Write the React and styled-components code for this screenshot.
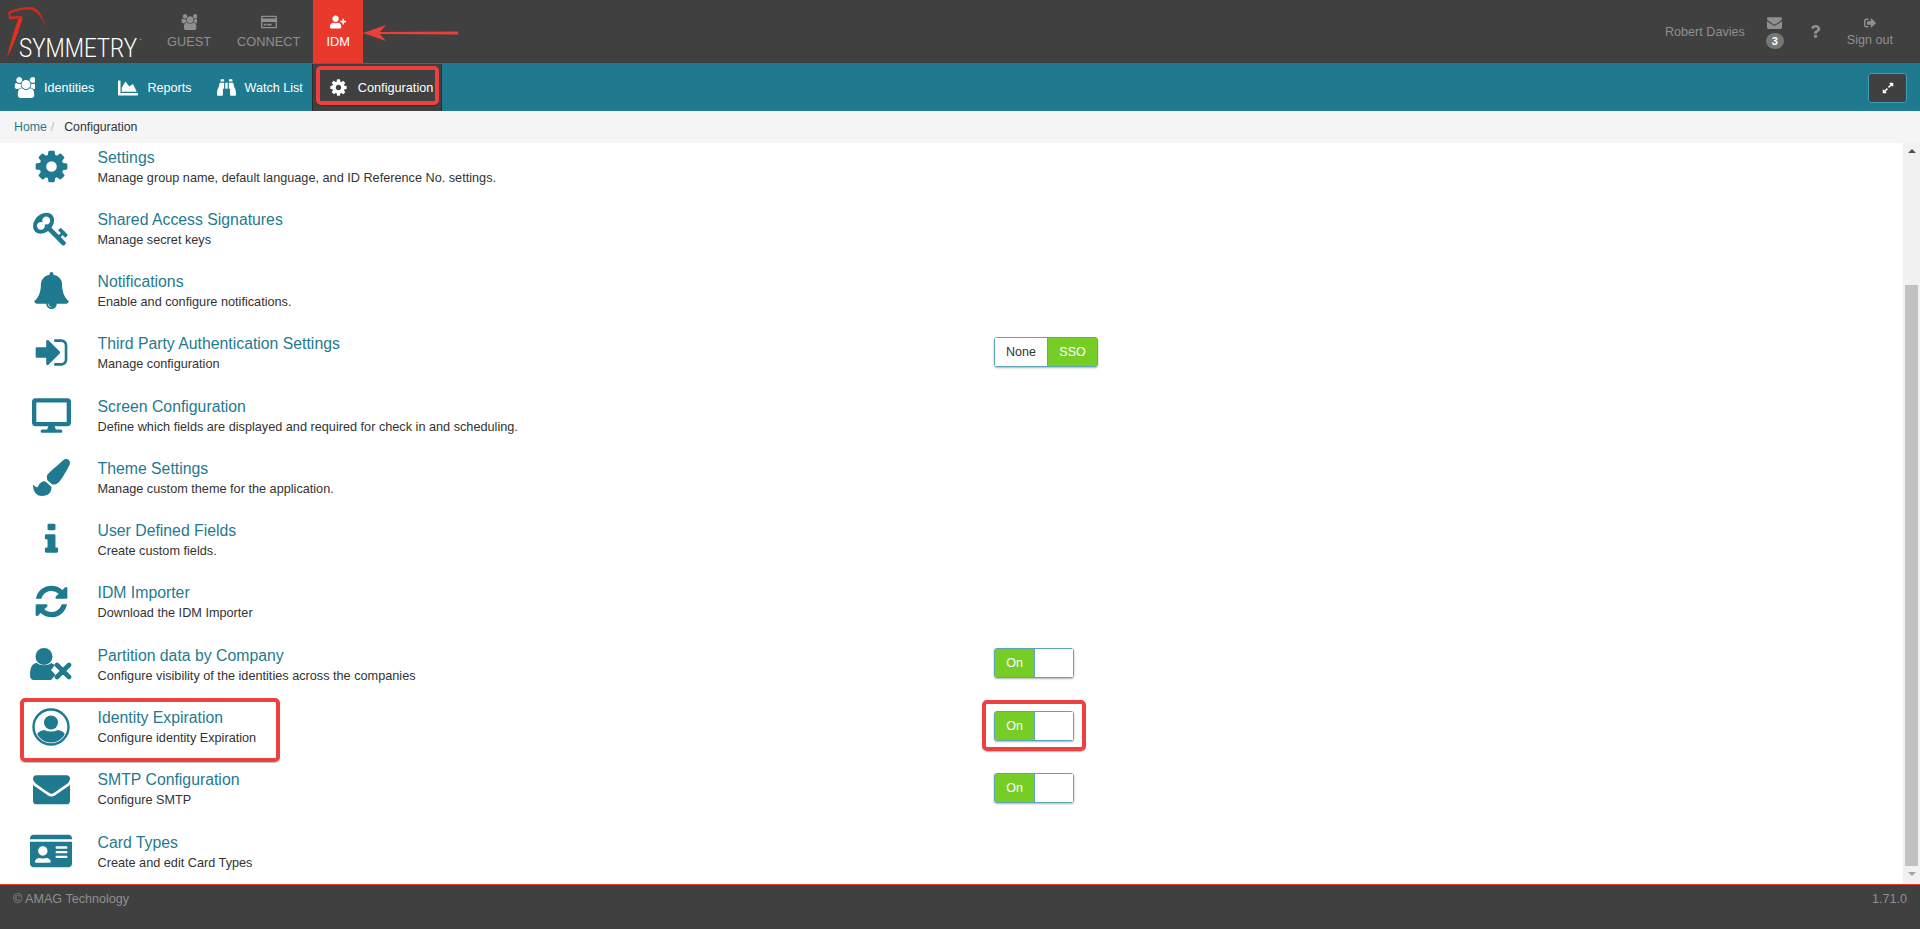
import styled, { createGlobalStyle } from "styled-components";
import {
  FaBinoculars,
  FaChartArea,
  FaDesktop,
  FaExpandAlt,
  FaIdCard,
  FaPaintBrush,
  FaQuestion,
  FaRegCreditCard,
  FaSignOutAlt,
  FaUserPlus,
} from "react-icons/fa";

const GlobalStyle = createGlobalStyle`
  html, body {
    margin: 0;
    padding: 0;
    height: 100%;
    overflow: hidden;
    font-family: "Liberation Sans", Arial, sans-serif;
  }
  * { box-sizing: border-box; }
`;

const PATHS = {
  users:
    "M657 896q-162 5-265 128h-134q-82 0-138-40.5t-56-118.5q0-353 124-353 6 0 43.5 21t97.5 42.5 119 21.5q67 0 133-23-5 37-5 66 0 139 81 256zm1071 637q0 120-73 189.5t-194 69.5h-874q-121 0-194-69.5t-73-189.5q0-53 3.5-103.5t14-109 26.5-108.5 43-97.5 62-81 85.5-53.5 111.5-20q10 0 43 21.5t73 48 107 48 135 21.5 135-21.5 107-48 73-48 43-21.5q61 0 111.5 20t85.5 53.5 62 81 43 97.5 26.5 108.5 14 109 3.5 103.5zm-1024-1277q0 106-75 181t-181 75-181-75-75-181 75-181 181-75 181 75 75 181zm704 384q0 159-112.5 271.5t-271.5 112.5-271.5-112.5-112.5-271.5 112.5-271.5 271.5-112.5 271.5 112.5 112.5 271.5zm576 225q0 78-56 118.5t-138 40.5h-134q-103-123-265-128 81-117 81-256 0-29-5-66 66 23 133 23 59 0 119-21.5t97.5-42.5 43.5-21q124 0 124 353zm-128-609q0 106-75 181t-181 75-181-75-75-181 75-181 181-75 181 75 75 181z",
  cog:
    "M1152 896q0-106-75-181t-181-75-181 75-75 181 75 181 181 75 181-75 75-181zm512-109v222q0 12-8 23t-20 13l-185 28q-19 54-39 91 35 50 107 138 10 12 10 25t-9 23q-27 37-99 108t-94 71q-12 0-26-9l-138-108q-44 23-91 38-16 136-29 186-7 28-36 28h-222q-14 0-24.5-8.5t-11.5-21.5l-28-184q-49-16-90-37l-141 107q-10 9-25 9-14 0-25-11-126-114-165-168-7-10-7-23 0-12 8-23 15-21 51-66.5t54-70.5q-27-50-41-99l-183-27q-13-2-21-12.5t-8-23.5v-222q0-12 8-23t19-13l186-28q14-46 39-92-40-57-107-138-10-12-10-24 0-10 9-23 26-36 98.5-107.5t94.5-71.5q13 0 26 10l138 107q44-23 91-38 16-136 29-186 7-28 36-28h222q14 0 24.5 8.5t11.5 21.5l28 184q49 16 90 37l142-107q9-9 24-9 13 0 25 10 129 119 165 170 7 8 7 22 0 12-8 23-15 21-51 66.5t-54 70.5q26 50 41 98l183 28q13 2 21 12.5t8 23.5z",
  key:
    "M832 512q0-80-56-136t-136-56-136 56-56 136q0 42 19 83-41-19-83-19-80 0-136 56t-56 136 56 136 136 56 136-56 56-136q0-42-19-83 41 19 83 19 80 0 136-56t56-136zm851 704q0 17-49 66t-66 49q-9 0-28.5-16t-36.5-33-38.5-40-24.5-26l-96 96 220 220q28 28 28 68 0 42-39 81t-81 39q-40 0-68-28l-671-671q-176 131-365 131-163 0-265.5-102.5t-102.5-265.5q0-160 95-313t248-248 313-95q163 0 265.5 102.5t102.5 265.5q0 189-131 365l355 355 96-96q-3-3-26-24.5t-40-38.5-33-36.5-16-28.5q0-17 49-66t66-49q13 0 23 10 6 6 46 44.5t82 79.5 86.5 86 73 78 28.5 41z",
  bell:
    "M912 1696q0-16-16-16-59 0-101.5-42.5t-42.5-101.5q0-16-16-16t-16 16q0 73 51.5 124.5t124.5 51.5q16 0 16-16zm816-288q0 52-38 90t-90 38h-448q0 106-75 181t-181 75-181-75-75-181h-448q-52 0-90-38t-38-90q50-42 91-88t85-119.5 74.5-158.5 50-206 19.5-260q0-152 117-282.5t307-158.5q-8-19-8-39 0-40 28-68t68-28 68 28 28 68q0 20-8 39 190 28 307 158.5t117 282.5q0 139 19.5 260t50 206 74.5 158.5 85 119.5 91 88z",
  signIn:
    "M1312 896q0 26-19 45l-544 544q-19 19-45 19t-45-19-19-45v-288h-448q-26 0-45-19t-19-45v-384q0-26 19-45t45-19h448v-288q0-26 19-45t45-19 45 19l544 544q19 19 19 45zm352-352v704q0 119-84.5 203.5t-203.5 84.5h-320q-13 0-22.5-9.5t-9.5-22.5q0-4-1-20t-.5-26.5 3-23.5 10-19.5 20.5-6.5h320q66 0 113-47t47-113v-704q0-66-47-113t-113-47h-312l-11.5-1-11.5-3-8-5.5-7-9-2-13.5q0-4-1-20t-.5-26.5 3-23.5 10-19.5 20.5-6.5h320q119 0 203.5 84.5t84.5 203.5z",
  info:
    "M1216 1344v128q0 26-19 45t-45 19h-512q-26 0-45-19t-19-45v-128q0-26 19-45t45-19h64v-384h-64q-26 0-45-19t-19-45v-128q0-26 19-45t45-19h384q26 0 45 19t19 45v576h64q26 0 45 19t19 45zm-128-1152v192q0 26-19 45t-45 19h-256q-26 0-45-19t-19-45v-192q0-26 19-45t45-19h256q26 0 45 19t19 45z",
  refresh:
    "M1639 1056q0 5-1 7-64 268-268 434.5t-478 166.5q-146 0-282.5-55t-243.5-157l-129 129q-19 19-45 19t-45-19-19-45v-448q0-26 19-45t45-19h448q26 0 45 19t19 45-19 45l-137 137q71 66 161 102t187 36q134 0 250-65t186-179q11-17 53-117 8-23 30-23h192q13 0 22.5 9.5t9.5 22.5zm25-800v448q0 26-19 45t-45 19h-448q-26 0-45-19t-19-45 19-45l138-138q-148-137-349-137-134 0-250 65t-186 179q-11 17-53 117-8 23-30 23h-199q-13 0-22.5-9.5t-9.5-22.5v-7q65-268 270-434.5t480-166.5q146 0 284 55.5t245 156.5l130-129q19-19 45-19t45 19 19 45z",
  envelope:
    "M1792 710v794q0 66-47 113t-113 47h-1472q-66 0-113-47t-47-113v-794q44 49 101 87 362 246 497 345 57 42 92.5 65.5t94.5 48 110 24.5h2q51 0 110-24.5t94.5-48 92.5-65.5q170-123 498-345 57-39 100-87zm0-294q0 79-49 151t-122 123q-376 261-468 325-10 7-42.5 30.5t-54 38-52 32.5-57.5 27-50 9h-2q-23 0-50-9t-57.5-27-52-32.5-54-38-42.5-30.5q-91-64-262-182.5t-205-142.5q-62-42-117-115.5t-55-136.5q0-78 41.5-130t118.5-52h1472q65 0 112.5 47t47.5 113z",
};

const Fa4 = ({ name, size }) => (
  <svg width={size} height={size} viewBox="0 0 1792 1792" fill="currentColor">
    <path d={PATHS[name]} />
  </svg>
);

const UserCircleIcon = () => (
  <svg width="38" height="38" viewBox="0 0 38 38">
    <defs>
      <clipPath id="userRing">
        <circle cx="19" cy="19" r="15.5" />
      </clipPath>
    </defs>
    <circle cx="19" cy="19" r="17.5" fill="none" stroke="currentColor" strokeWidth="2.4" />
    <circle cx="19" cy="14.5" r="7" fill="currentColor" />
    <path d="M4 38V31q0-8 8-9 7 3 14 0 8 1 8 9v7z" fill="currentColor" clipPath="url(#userRing)" />
  </svg>
);

const UserTimesIcon = () => (
  <svg width="42" height="33" viewBox="0 0 42 33" fill="currentColor">
    <circle cx="14" cy="8.5" r="8.5" />
    <path d="M0 27C0 20 2 15 7 15 10 18 18 18 21 15L25 17 21 22 25.5 27 21 32H4Q0 32 0 27z" />
    <path d="M27 17 33 23M39 17 33 23M27 29 33 23M39 29 33 23" stroke="currentColor" strokeWidth="4.6" strokeLinecap="round" fill="none" />
  </svg>
);

const Logo = () => (
  <LogoSvg width="154" height="63" viewBox="0 0 154 63">
    <path d="M8 12C14 9 22 7 30 7 38 7 42 14 46.500 28 42 17 37 11 30 9.500 22 9 15 11 10 13.500L11 16.500 22 16 22.500 18 9.500 19.500z" fill="#d42a20" />
    <path d="M18.500 18.500 22.500 18C19 31 13 47 7 57.500 9.500 45 14 31 18.500 18.500z" fill="#e0301f" />
    <text x="19" y="57" fill="#fff" fontSize="25" fontWeight="300" fontFamily="Roboto, sans-serif" textLength="118" lengthAdjust="spacingAndGlyphs">
      SYMMETRY
    </text>
    <text x="139" y="42" fill="#bbb" fontSize="5" fontFamily="Roboto, sans-serif">
      ™
    </text>
  </LogoSvg>
);

const SETTINGS = [
  { title: "Settings", text: "Manage group name, default language, and ID Reference No. settings.", icon: <Fa4 name="cog" size={37} /> },
  { title: "Shared Access Signatures", text: "Manage secret keys", icon: <Fa4 name="key" size={37} /> },
  { title: "Notifications", text: "Enable and configure notifications.", icon: <Fa4 name="bell" size={37} /> },
  { title: "Third Party Authentication Settings", text: "Manage configuration", icon: <Fa4 name="signIn" size={37} />, control: "sso" },
  { title: "Screen Configuration", text: "Define which fields are displayed and required for check in and scheduling.", icon: <FaDesktop size={39} /> },
  { title: "Theme Settings", text: "Manage custom theme for the application.", icon: <FaPaintBrush size={37} /> },
  { title: "User Defined Fields", text: "Create custom fields.", icon: <Fa4 name="info" size={37} /> },
  { title: "IDM Importer", text: "Download the IDM Importer", icon: <Fa4 name="refresh" size={37} /> },
  { title: "Partition data by Company", text: "Configure visibility of the identities across the companies", icon: <UserTimesIcon />, control: "on" },
  { title: "Identity Expiration", text: "Configure identity Expiration", icon: <UserCircleIcon />, control: "on", marked: true },
  { title: "SMTP Configuration", text: "Configure SMTP", icon: <Fa4 name="envelope" size={37} />, control: "on" },
  { title: "Card Types", text: "Create and edit Card Types", icon: <FaIdCard size={42} /> },
];

const App = () => {
  return (
    <>
      <GlobalStyle />
      <Page>
        <Header>
          <Logo />
          <ProductTab>
            <Fa4 name="users" size={16} />
            GUEST
          </ProductTab>
          <ProductTab>
            <FaRegCreditCard size={16} />
            CONNECT
          </ProductTab>
          <ProductTab $active>
            <FaUserPlus size={16} />
            IDM
            <TabArrow width="98" height="18" viewBox="0 0 98 18">
              <path d="M0 9 23 1 17 8 95 7.500V10.500L17 10 23 17z" fill="#e8403a" />
            </TabArrow>
          </ProductTab>
          <HeaderRight>
            <UserName>Robert Davies</UserName>
            <HeaderItem $gap={3}>
              <Fa4 name="envelope" size={15} />
              <Badge>3</Badge>
            </HeaderItem>
            <HelpItem>
              <FaQuestion size={13} />
            </HelpItem>
            <HeaderItem $gap={4}>
              <FaSignOutAlt size={12} />
              Sign out
            </HeaderItem>
          </HeaderRight>
        </Header>

        <NavBar>
          <NavItem $after={24}>
            <Fa4 name="users" size={21} />
            Identities
          </NavItem>
          <NavItem $after={25}>
            <FaChartArea size={20} />
            Reports
          </NavItem>
          <NavItem $after={9}>
            <FaBinoculars size={19} />
            Watch List
          </NavItem>
          <ConfigTab>
            <Fa4 name="cog" size={19} />
            Configuration
            <Marker $top={2} $right={2} $bottom={6} $left={3} />
          </ConfigTab>
          <ExpandButton>
            <FaExpandAlt size={12} />
          </ExpandButton>
        </NavBar>

        <Breadcrumb>
          <HomeLink>Home</HomeLink>
          <Slash>/</Slash>
          Configuration
        </Breadcrumb>

        <Main>
          <List>
            <Rows>
              {SETTINGS.map((item) => (
                <Row key={item.title}>
                  <RowLabel>
                    <IconCell>{item.icon}</IconCell>
                    <div>
                      <RowTitle>{item.title}</RowTitle>
                      <RowText>{item.text}</RowText>
                    </div>
                    {item.marked && <Marker $top={2} $right={714} $bottom={-3} $left={20} />}
                  </RowLabel>
                  {item.control === "sso" && (
                    <Toggle>
                      <ToggleSide $width={52}>None</ToggleSide>
                      <ToggleSide $width={50} $on>SSO</ToggleSide>
                    </Toggle>
                  )}
                  {item.control === "on" && (
                    <Toggle>
                      <ToggleSide $width={39} $on>On</ToggleSide>
                      <ToggleSide $width={39} />
                      {item.marked && <Marker $top={-12} $right={-13} $bottom={-11} $left={-13} />}
                    </Toggle>
                  )}
                </Row>
              ))}
            </Rows>
          </List>
          <ScrollBar>
            <ArrowUp />
            <Thumb />
            <ArrowDown />
          </ScrollBar>
        </Main>

        <Footer>
          <span>© AMAG Technology</span>
          <span>1.71.0</span>
        </Footer>
      </Page>
    </>
  );
};

export default App;

const Page = styled.div`
  height: 929px;
  display: flex;
  flex-direction: column;
  background: #fff;
`;
const Header = styled.header`
  height: 64px;
  flex-shrink: 0;
  display: flex;
  background: #404040;
  border-bottom: 1px solid #c0392b;
`;
const LogoSvg = styled.svg`
  flex-shrink: 0;
  display: block;
`;
const ProductTab = styled.div`
  position: relative;
  display: flex;
  flex-direction: column;
  align-items: center;
  justify-content: center;
  gap: 4px;
  height: 63px;
  padding: 0 13px;
  font-size: 12.8px;
  color: ${(p) => (p.$active ? "#fff" : "#8f8f8f")};
  background: ${(p) => (p.$active ? "#e83a2c" : "transparent")};
`;
const TabArrow = styled.svg`
  position: absolute;
  left: 100%;
  top: 24px;
`;
const HeaderRight = styled.div`
  margin-left: auto;
  display: flex;
  align-items: center;
  color: #8f8f8f;
  font-size: 12.6px;
  padding-right: 27px;
`;
const UserName = styled.div`
  margin-right: 21px;
`;
const HeaderItem = styled.div`
  display: flex;
  flex-direction: column;
  align-items: center;
  gap: ${(p) => p.$gap}px;
`;
const HelpItem = styled.div`
  display: flex;
  margin: 0 25px;
`;
const Badge = styled.span`
  width: 18px;
  height: 16px;
  border-radius: 50%;
  background: #777;
  color: #fff;
  font-size: 11px;
  font-weight: 700;
  display: flex;
  align-items: center;
  justify-content: center;
`;
const NavBar = styled.nav`
  height: 47px;
  flex-shrink: 0;
  display: flex;
  align-items: center;
  padding: 0 13px 0 14px;
  background: #1f7a8f;
`;
const NavItem = styled.div`
  display: flex;
  align-items: center;
  gap: 9px;
  margin-right: ${(p) => p.$after}px;
  font-size: 12.6px;
  color: #fff;
`;
const ConfigTab = styled.div`
  position: relative;
  align-self: stretch;
  width: 130px;
  display: flex;
  align-items: center;
  gap: 10px;
  padding-left: 16px;
  font-size: 12.7px;
  color: #fff;
  background: #404040;
  border: 1px solid #2c2c2c;
  border-top: 0;
  border-bottom: 0;
`;
const ExpandButton = styled.div`
  margin-left: auto;
  width: 39px;
  height: 30px;
  display: flex;
  align-items: center;
  justify-content: center;
  color: #fff;
  background: #404040;
  border: 1px solid #3f9db3;
  border-radius: 3px;
`;
const Marker = styled.span`
  position: absolute;
  top: ${(p) => p.$top}px;
  right: ${(p) => p.$right}px;
  bottom: ${(p) => p.$bottom}px;
  left: ${(p) => p.$left}px;
  border: 4px solid #ef4040;
  border-radius: 5px;
  box-shadow: 0 1px 1px rgba(0, 0, 0, 0.25);
  pointer-events: none;
`;
const Breadcrumb = styled.div`
  height: 32px;
  flex-shrink: 0;
  display: flex;
  align-items: center;
  padding-left: 14px;
  background: #f5f5f5;
  font-size: 12.3px;
  color: #333;
`;
const HomeLink = styled.span`
  color: #1f7a8f;
`;
const Slash = styled.span`
  color: #bbb;
  margin: 0 10px 0 4px;
`;
const Main = styled.main`
  flex: 1;
  min-height: 0;
  display: flex;
  background: #fff;
`;
const List = styled.div`
  flex: 1;
  min-width: 0;
  overflow: hidden;
`;
// the list is scrolled down a little in the picture, so the first row starts cut off
const Rows = styled.div`
  margin-top: -7px;
  display: grid;
  grid-auto-rows: 62.27px;
`;
const Row = styled.div`
  display: flex;
  align-items: center;
`;
const RowLabel = styled.div`
  position: relative;
  width: 994px;
  height: 100%;
  flex-shrink: 0;
  display: flex;
  align-items: center;
`;
const IconCell = styled.div`
  width: 102px;
  margin-right: -4.5px;
  margin-bottom: 2px;
  display: flex;
  justify-content: center;
  color: #1f7a8f;
`;
const RowTitle = styled.div`
  font-size: 15.8px;
  line-height: 20px;
  color: #1f7a8f;
`;
const RowText = styled.div`
  margin-top: 2px;
  font-size: 12.7px;
  line-height: 17px;
  color: #333;
`;
const Toggle = styled.div`
  position: relative;
  display: flex;
  height: 30px;
  margin-top: -4px;
  border: 1px solid #5ba5b5;
  border-radius: 3px;
  box-shadow: 0 1px 2px rgba(0, 0, 0, 0.3);
  font-size: 12.5px;
  background: #fff;
`;
const ToggleSide = styled.div`
  width: ${(p) => p.$width}px;
  display: flex;
  align-items: center;
  justify-content: center;
  color: ${(p) => (p.$on ? "#fff" : "#333")};
  background: ${(p) => (p.$on ? "#76cd26" : "#fff")};
  & + & {
    border-left: 1px solid #5ba5b5;
  }
`;
const ScrollBar = styled.div`
  width: 17px;
  flex-shrink: 0;
  display: flex;
  flex-direction: column;
  align-items: center;
  background: #f1f1f1;
`;
const ArrowUp = styled.span`
  width: 0;
  height: 0;
  margin-top: 6px;
  border: 4px solid transparent;
  border-top: 0;
  border-bottom: 4px solid #505050;
`;
const Thumb = styled.div`
  width: 13px;
  height: 581px;
  margin-top: 132px;
  background: #c1c1c1;
`;
const ArrowDown = styled.span`
  width: 0;
  height: 0;
  margin-top: 6px;
  border: 4px solid transparent;
  border-bottom: 0;
  border-top: 4px solid #a3a3a3;
`;
const Footer = styled.footer`
  height: 45px;
  flex-shrink: 0;
  display: flex;
  justify-content: space-between;
  padding: 7px 13px 0 13px;
  background: #404040;
  border-top: 1px solid #e83a2c;
  color: #8f8f8f;
  font-size: 12.6px;
`;
